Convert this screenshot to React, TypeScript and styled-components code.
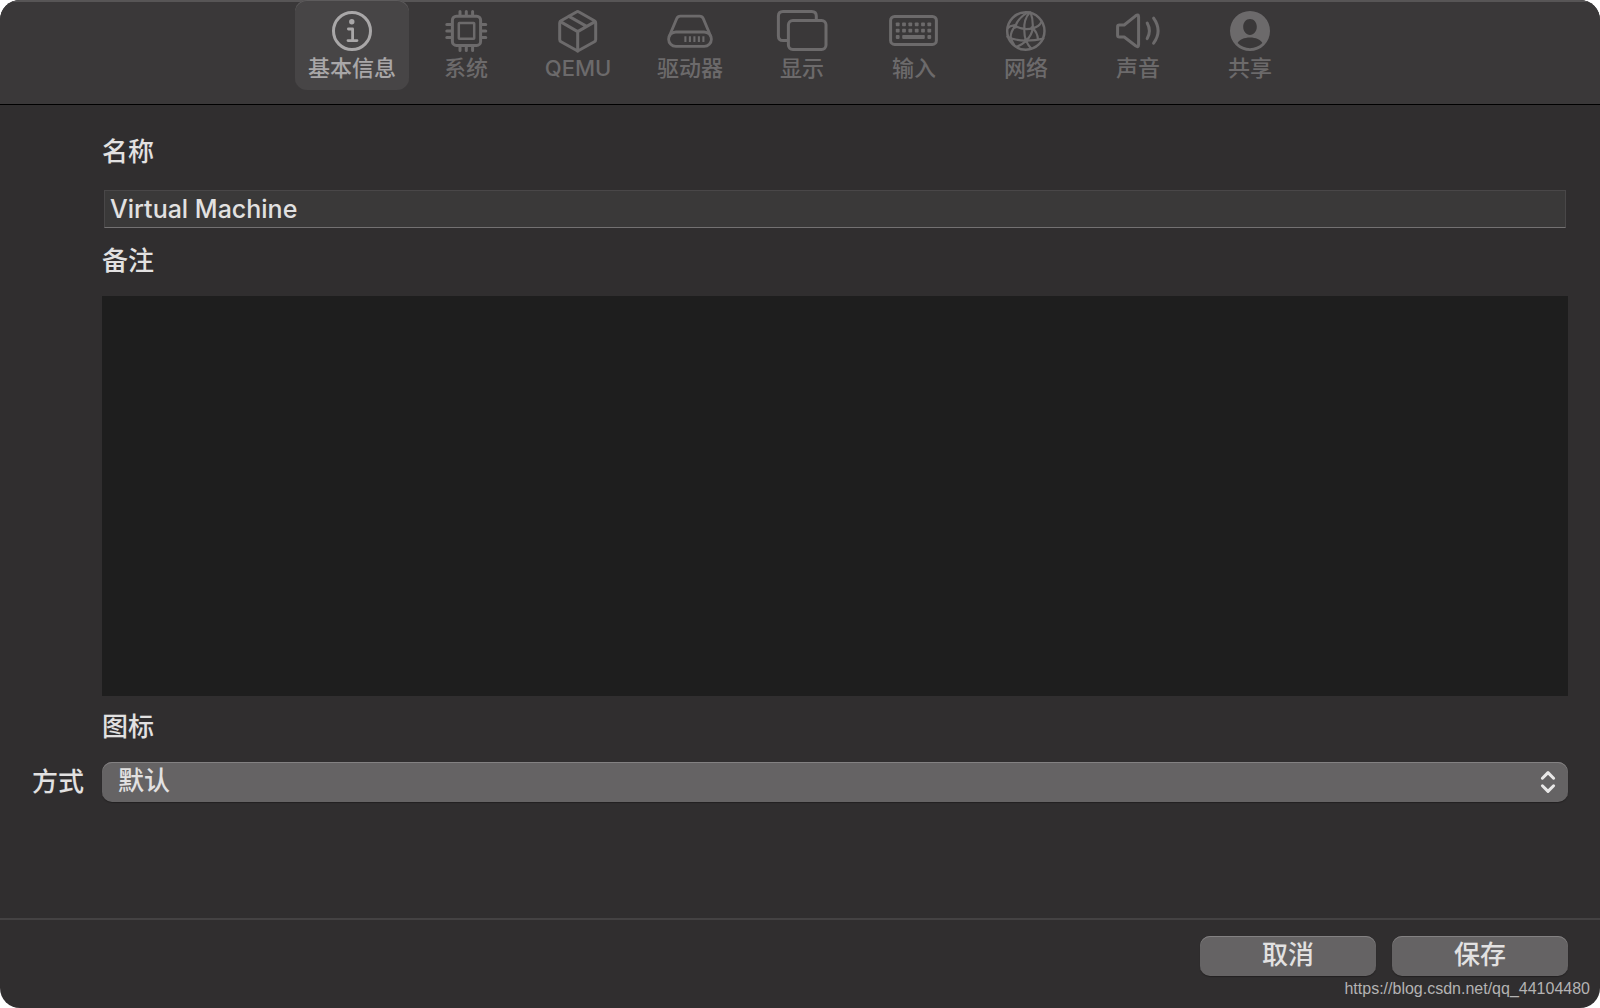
import React, { useState } from "react";
import styled, { createGlobalStyle } from "styled-components";

const GlobalStyle = createGlobalStyle`
  * { box-sizing: border-box; }
  body {
    margin: 0;
    background: #ffffff;
    font-family: Inter, "Noto Sans CJK SC", sans-serif;
  }
  button, input, textarea, select { font: inherit; color: inherit; margin: 0; }
`;

const Window = styled.div`
  position: relative;
  display: flex;
  flex-direction: column;
  min-height: 100vh;
  overflow: hidden;
  border-radius: 20px;
  background: #302e2f;
  color: #e2e1e1;
  font-size: 26px;
  font-weight: 500;
  line-height: 32px;
`;

const Toolbar = styled.nav`
  display: flex;
  justify-content: center;
  gap: 2px;
  height: 105px;
  background: #3a3839;
  border-bottom: 1px solid #000000;
  box-shadow: inset 0 2px #575556;
`;

const Tab = styled.button<{ $active: boolean }>`
  display: flex;
  flex-direction: column;
  align-items: center;
  height: 90px;
  min-width: 110px;
  padding: 8px 13px 0;
  border: 0;
  border-radius: 12px;
  background: ${(p) => (p.$active ? "#474546" : "transparent")};
  box-shadow: inset 0 1px ${(p) => (p.$active ? "#5d5b5c" : "transparent")};
  color: ${(p) => (p.$active ? "#a9a7a8" : "#6c6a6b")};
  font-size: 22px;
  line-height: 28px;
  white-space: nowrap;
`;

const TabIcon = styled.svg`
  display: block;
  width: 56px;
  height: 46px;
  fill: none;
  stroke: currentColor;
  stroke-width: 3;
  stroke-linecap: round;
  stroke-linejoin: round;
`;

const Form = styled.main`
  display: flex;
  flex-direction: column;
  flex: 1;
  padding: 16px 32px 0 102px;
`;

const FieldLabel = styled.label`
  padding: 15px 0 19px;
`;

const NameFrame = styled.div`
  display: flex;
  padding: 3px 2px 2px;
`;

const NameInput = styled.input`
  flex: 1;
  min-width: 0;
  height: 38px;
  padding: 0 5px 1px;
  border: 1px solid #494748;
  border-bottom: 1px solid #737172;
  border-radius: 0;
  outline: 0;
  background: #3a3939;
  font-size: 25px;
`;

const Notes = styled.textarea`
  height: 400px;
  padding: 8px;
  border: 0;
  border-radius: 0;
  outline: 0;
  resize: none;
  background: #1e1e1e;
`;

const StyleRow = styled.div`
  display: grid;
  grid-template-columns: 70px 1fr;
  align-items: center;
  margin-left: -70px;
`;

const SelectFrame = styled.div`
  position: relative;
  display: grid;
`;

const StyleSelect = styled.select`
  appearance: none;
  height: 40px;
  padding: 0 48px 2px 16px;
  border: 0;
  border-radius: 10px;
  outline: 0;
  background: #656364;
  box-shadow: inset 0 1px #838182, 0 1px 1px #232122;
`;

const SelectArrows = styled.svg`
  position: absolute;
  top: 8px;
  right: 12px;
  width: 16px;
  height: 24px;
  fill: none;
  stroke: #e8e7e7;
  stroke-width: 3;
  stroke-linecap: round;
  stroke-linejoin: round;
  pointer-events: none;
`;

const Footer = styled.footer`
  display: flex;
  justify-content: flex-end;
  gap: 16px;
  padding: 16px 32px 32px;
  border-top: 2px solid #444243;
`;

const PushButton = styled.button`
  width: 176px;
  height: 40px;
  padding: 0 0 2px;
  border: 0;
  border-radius: 10px;
  background: #656364;
  box-shadow: inset 0 1px #838182, 0 1px 1px #232122;
`;

const SourceLink = styled.a`
  position: absolute;
  right: 10px;
  bottom: 9px;
  color: #b4b3b3;
  font-family: "Liberation Sans", sans-serif;
  font-size: 16px;
  font-weight: 400;
  line-height: 20px;
  text-decoration: none;
`;

const InfoIcon = () => (
  <TabIcon viewBox="0 0 56 46" aria-hidden="true">
    <circle cx="28" cy="23" r="18.5" />
    <circle cx="27.8" cy="13.8" r="2.7" fill="currentColor" stroke="none" />
    <path strokeWidth="2.8" d="M24.4 21H28.6V32.6M24 32.6H33" />
  </TabIcon>
);

const ChipIcon = () => (
  <TabIcon viewBox="0 0 56 46" aria-hidden="true">
    <rect x="14.4" y="8.2" width="28.2" height="29.2" rx="4" />
    <rect x="20.8" y="15" width="15.4" height="15.8" rx="0.5" strokeWidth="2.5" />
    <path
      d="M22 3.4V7M28.3 3.4V7M34.6 3.4V7M22 39V42.4M28.3 39V42.4M34.6 39V42.4M8.8 16.6H13M8.8 23H13M8.8 29.4H13M44 16.6H47.8M44 23H47.8M44 29.4H47.8"
    />
  </TabIcon>
);

const BoxIcon = () => (
  <TabIcon viewBox="0 0 56 46" aria-hidden="true">
    <path d="M26.4 4Q27.7 3.2 29 4L44.4 12.7Q45.7 13.5 45.7 15V31.5Q45.7 33 44.4 33.7L27.7 43L11 33.7Q9.7 33 9.7 31.5V15Q9.7 13.5 11 12.7Z" />
    <path d="M10.4 13.6L27.7 23.6L45 13.6M27.7 23.6V43M19 8.4L36.6 18.4" />
  </TabIcon>
);

const DriveIcon = () => (
  <TabIcon viewBox="0 0 56 46" aria-hidden="true">
    <rect x="6.6" y="24" width="42.8" height="14.4" rx="7.2" strokeWidth="2.8" />
    <path strokeWidth="2.8" d="M7.6 27.5L14.7 10.6Q15.8 8.2 18.4 8.2H37.6Q40.2 8.2 41.3 10.6L48.4 27.5" />
    <path strokeWidth="2.1" strokeLinecap="butt" d="M23.4 28.2V34M27.9 28.2V34M32.4 28.2V34M36.9 28.2V34M41.4 28.2V34" />
  </TabIcon>
);

const DisplaysIcon = () => (
  <TabIcon viewBox="0 0 56 46" aria-hidden="true">
    <path strokeLinecap="butt" d="M42.3 11.5V8Q42.3 3.4 37.7 3.4H9Q4.4 3.4 4.4 8V28Q4.4 32.6 9 32.6H14" />
    <rect x="14.4" y="12.4" width="37.6" height="29" rx="4.4" />
  </TabIcon>
);

const keyColumns = [11.7, 18, 24.3, 30.7, 37, 43.3];

const KeyboardIcon = () => (
  <TabIcon viewBox="0 0 56 46" aria-hidden="true">
    <rect x="4.6" y="8.4" width="45.8" height="28" rx="4" />
    <g fill="currentColor" stroke="none">
      {keyColumns.map((x) => (
        <React.Fragment key={x}>
          <rect x={x - 1.9} y="14.4" width="3.8" height="3.8" rx="0.8" />
          <rect x={x - 1.9} y="20.8" width="3.8" height="3.8" rx="0.8" />
        </React.Fragment>
      ))}
      <rect x="9.8" y="27.1" width="3.8" height="3.8" rx="0.8" />
      <rect x="16.2" y="27.1" width="22.6" height="3.8" rx="0.8" />
      <rect x="41.4" y="27.1" width="3.8" height="3.8" rx="0.8" />
    </g>
  </TabIcon>
);

const GlobeIcon = () => (
  <TabIcon viewBox="54 24 168 138" aria-hidden="true">
    <circle cx="137.5" cy="93" r="56" strokeWidth="7.5" />
    <g strokeWidth="6.5">
      <path d="M84 84Q93 74 105 78Q130 92 158 85Q178 80 184 66" />
      <path d="M82 110Q108 122 137 122Q166 122 190 116" />
      <path d="M144 37Q116 52 106 78Q92 94 92 112Q96 124 102 134" />
      <path d="M150 37Q130 58 133 92Q133 108 138 122Q144 136 154 146" />
      <path d="M152 38Q160 60 158 85Q156 106 138 122Q128 134 110 140" />
      <path d="M158 85Q172 96 174 118" />
    </g>
    <g fill="currentColor" stroke="none">
      <circle cx="105" cy="79" r="7" />
      <circle cx="158" cy="85" r="7" />
      <circle cx="138" cy="122" r="7" />
    </g>
  </TabIcon>
);

const SpeakerIcon = () => (
  <TabIcon viewBox="0 0 56 46" aria-hidden="true">
    <path
      d="M9.4 17H14.2L25.6 7.8Q28.6 5.6 28.6 8.8V36.6Q28.6 40 25.6 37.8L14.2 29H9.4Q7.6 29 7.6 27.2V18.8Q7.6 17 9.4 17Z"
    />
    <path d="M37.2 15Q41.6 23 37.2 30.6M43.6 10.2Q52.6 23 43.6 35.2" />
  </TabIcon>
);

const PersonIcon = () => (
  <TabIcon viewBox="0 0 56 46" aria-hidden="true">
    <path
      fill="currentColor"
      fillRule="evenodd"
      stroke="none"
      d="M28 3A20 20 0 1 1 28 43A20 20 0 1 1 28 3ZM28 11C24 11 21.2 14.4 21.2 18.8C21.2 23.4 24.2 27 28 27C31.8 27 34.8 23.4 34.8 18.8C34.8 14.4 32 11 28 11ZM15.6 35C19 38.4 23.4 40.2 28 40.2C32.6 40.2 37 38.4 40.4 35C38.6 31.8 33.8 29.6 28 29.6C22.2 29.6 17.4 31.8 15.6 35Z"
    />
  </TabIcon>
);

const tabs = [
  { label: "基本信息", Icon: InfoIcon },
  { label: "系统", Icon: ChipIcon },
  { label: "QEMU", Icon: BoxIcon },
  { label: "驱动器", Icon: DriveIcon },
  { label: "显示", Icon: DisplaysIcon },
  { label: "输入", Icon: KeyboardIcon },
  { label: "网络", Icon: GlobeIcon },
  { label: "声音", Icon: SpeakerIcon },
  { label: "共享", Icon: PersonIcon },
];

export default function App() {
  const [active, setActive] = useState(0);
  return (
    <>
      <GlobalStyle />
      <Window>
        <Toolbar>
          {tabs.map(({ label, Icon }, i) => (
            <Tab key={label} type="button" $active={i === active} onClick={() => setActive(i)}>
              <Icon />
              {label}
            </Tab>
          ))}
        </Toolbar>
        <Form>
          <FieldLabel htmlFor="vm-name">名称</FieldLabel>
          <NameFrame>
            <NameInput id="vm-name" type="text" defaultValue="Virtual Machine" />
          </NameFrame>
          <FieldLabel htmlFor="vm-notes">备注</FieldLabel>
          <Notes id="vm-notes" />
          <FieldLabel as="div">图标</FieldLabel>
          <StyleRow>
            <label htmlFor="vm-style">方式</label>
            <SelectFrame>
              <StyleSelect id="vm-style">
                <option>默认</option>
              </StyleSelect>
              <SelectArrows viewBox="0 0 16 24" aria-hidden="true">
                <path d="M2.4 8.2L8 2.6L13.6 8.2M2.4 15.8L8 21.4L13.6 15.8" />
              </SelectArrows>
            </SelectFrame>
          </StyleRow>
        </Form>
        <Footer>
          <PushButton type="button">取消</PushButton>
          <PushButton type="button">保存</PushButton>
        </Footer>
        <SourceLink href="https://blog.csdn.net/qq_44104480">https://blog.csdn.net/qq_44104480</SourceLink>
      </Window>
    </>
  );
}
